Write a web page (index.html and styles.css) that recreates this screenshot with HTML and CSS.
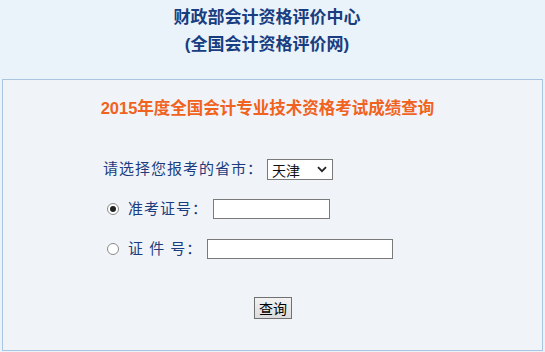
FILE: index.html
```html
<!DOCTYPE html>
<html lang="zh-CN">
<head>
    <meta charset="UTF-8">
    <title>2015年度全国会计专业技术资格考试成绩查询</title>
    <link rel="stylesheet" href="styles.css">
</head>
<body>
    <div class="header">
        <div>财政部会计资格评价中心</div>
        <div>(全国会计资格评价网)</div>
    </div>

    <div class="query-box">
        <h1>2015年度全国会计专业技术资格考试成绩查询</h1>

        <form class="query-form" onsubmit="return false">
            <div class="row">
                <label for="province">请选择您报考的省市：</label>
                <span class="select-wrap">
                    <select id="province" class="province">
                        <option>北京</option>
                        <option selected>天津</option>
                        <option>河北</option>
                    </select>
                    <svg class="chevron" width="10" height="7" viewBox="0 0 10 7">
                        <path d="M1 1.2 L5 5.2 L9 1.2" fill="none" stroke="#222" stroke-width="1.8"/>
                    </svg>
                </span>
            </div>

            <div class="row indent">
                <input type="radio" name="qtype" id="byExam" class="radio" checked>
                <label for="byExam">准考证号：</label>
                <input type="text" class="text-input short">
            </div>

            <div class="row indent">
                <input type="radio" name="qtype" id="byId" class="radio">
                <label for="byId">证 件 号：</label>
                <input type="text" class="text-input long">
            </div>

            <div class="actions">
                <button class="button">查询</button>
            </div>
        </form>
    </div>
</body>
</html>
```

FILE: styles.css
```css
:root {
    --bg-color: #eaf2fa;
    --box-color: #f0f4f8;
    --border-color: #a9c5df;
    --navy: #1b3c7d;
    --orange: #f0621d;
}

body {
    margin: 0;
    background-color: var(--bg-color);
    font-family: "Liberation Sans", "Noto Sans CJK SC", sans-serif;
    color: var(--navy);
}

.header {
    padding-top: 4px;
    padding-right: 11px;
    text-align: center;
    font-size: 17px;
    font-weight: bold;
    line-height: 27px;
    color: #183d80;
}

.query-box {
    margin: 21px 2px 0;
    height: 270px;
    background: var(--box-color);
    border: 1px solid var(--border-color);
}

h1 {
    margin: 0;
    padding-top: 18px;
    padding-right: 10px;
    text-align: center;
    font-size: 16.5px;
    line-height: 20px;
    color: var(--orange);
}

.query-form {
    padding-top: 40px;
    padding-left: 100px;
}

.row {
    display: flex;
    align-items: center;
    height: 22px;
    margin-bottom: 18px;
    font-size: 15px;
    letter-spacing: 1px;
}

.row.indent {
    padding-left: 4px;
}

.row label {
    line-height: 22px;
}

.select-wrap {
    position: relative;
    margin-left: 4px;
}

.province {
    appearance: none;
    width: 66px;
    height: 21px;
    margin: 0;
    padding: 0 0 0 4px;
    background: #fff;
    border: 1px solid #7a7a7a;
    border-radius: 0;
    font-family: "Noto Sans CJK SC", sans-serif;
    font-size: 14px;
    color: #111;
    display: block;
}

.chevron {
    position: absolute;
    right: 6px;
    top: 7px;
}

.radio {
    appearance: none;
    width: 12px;
    height: 12px;
    margin: 0 9px 0 0;
    border: 1px solid #8a8a8a;
    border-radius: 50%;
    background: #fff;
    position: relative;
}

.radio:checked::after {
    content: "";
    position: absolute;
    left: 2px;
    top: 2px;
    width: 6px;
    height: 6px;
    border-radius: 50%;
    background: #222;
}

.text-input {
    height: 20px;
    margin-left: 5px;
    padding: 0 3px;
    box-sizing: border-box;
    border: 1px solid #7a7a7a;
    background: #fff;
}

.text-input.short {
    width: 117px;
}

.text-input.long {
    width: 186px;
}

.actions {
    padding-top: 19px;
    padding-left: 151px;
}

.button {
    width: 38px;
    height: 22px;
    padding: 0;
    border: 1px solid #707070;
    border-radius: 0;
    background: linear-gradient(#f2f2f2, #dcdcdc);
    font-family: "Noto Sans CJK SC", sans-serif;
    font-size: 14px;
    line-height: 18px;
    color: #000;
    cursor: pointer;
}
```
